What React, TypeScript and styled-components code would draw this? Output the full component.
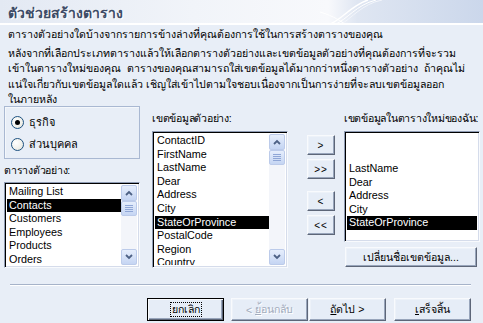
import React from 'react';
import styled, { createGlobalStyle, css } from 'styled-components';

const GlobalStyle = createGlobalStyle`
  html, body {
    margin: 0;
    padding: 0;
    background: #e8eef7;
  }
  * {
    box-sizing: border-box;
  }
`;

const FONT = `Tahoma, "Liberation Sans", "DejaVu Sans", "Noto Sans", sans-serif`;

const Dialog = styled.div`
  width: 483px;
  height: 323px;
  background: #e8eef7;
  font-family: ${FONT};
  font-size: 11px;
  color: #000;
  overflow: hidden;
  display: flex;
  flex-direction: column;
`;

const Header = styled.div`
  position: relative;
  height: 25px;
  flex: none;
  border-bottom: 2px solid #fff;
  background: linear-gradient(
    to right,
    #e3e9f3 0%,
    #f1f4f9 40%,
    #f8f9fc 68%,
    #dfe6f2 74%,
    #cbd7eb 100%
  );
  padding: 2px 0 0 8px;
  overflow: hidden;
`;

const Title = styled.div`
  position: relative;
  z-index: 1;
  font-size: 14px;
  font-weight: bold;
  color: #3d4b66;
  text-shadow: 1px 1px 0 #fff;
`;

const Swoosh = styled.svg`
  position: absolute;
  left: 320px;
  top: 0;
`;

const Intro = styled.div`
  flex: none;
  height: 81px;
  padding: 2px 8px 0 8px;
  font-size: 10.6px;
  line-height: 15.6px;
  white-space: nowrap;
  overflow: hidden;
`;

const Para = styled.p<{ $gap?: number }>`
  margin: 0 0 ${({ $gap }) => $gap ?? 0}px 0;
`;

const Main = styled.div`
  flex: none;
  height: 168px;
  display: flex;
  padding-left: 4px;
`;

const LeftCol = styled.div`
  width: 137px;
  display: flex;
  flex-direction: column;
`;

const GroupBox = styled.div`
  height: 53px;
  border: 1px solid #a9b8d2;
  box-shadow: inset 1px 1px 0 #f4f7fb;
  padding: 7px 0 0 6px;
  display: flex;
  flex-direction: column;
  gap: 6px;
`;

const RadioRow = styled.label`
  display: flex;
  align-items: center;
  gap: 5px;
  height: 16px;
`;

const RadioDot = styled.span<{ $checked?: boolean }>`
  width: 13px;
  height: 13px;
  border-radius: 50%;
  border: 1px solid #1c5180;
  background: radial-gradient(circle at 35% 35%, #ffffff 0%, #f0f0ea 60%, #d8d8cf 100%);
  display: flex;
  align-items: center;
  justify-content: center;
  &::after {
    content: '';
    width: 5px;
    height: 5px;
    border-radius: 50%;
    background: ${({ $checked }) => ($checked ? '#000' : 'transparent')};
  }
`;

const Label = styled.div<{ $top: number }>`
  margin-top: ${({ $top }) => $top}px;
  height: 13px;
  line-height: 13px;
  font-size: 10.6px;
  white-space: nowrap;
  letter-spacing: -0.25px;
`;

const ListBox = styled.div<{ $w: number; $h: number; $mt: number }>`
  width: ${({ $w }) => $w}px;
  height: ${({ $h }) => $h}px;
  margin-top: ${({ $mt }) => $mt}px;
  background: #fff;
  border: 1px solid;
  border-color: #8f9cb4 #f8fafd #f8fafd #8f9cb4;
  box-shadow: inset 1px 1px 0 #000, inset -1px -1px 0 #d5dceb;
  padding: 2px;
  display: flex;
  overflow: hidden;
`;

const Items = styled.div<{ $pt?: number }>`
  flex: 1;
  min-width: 0;
  padding-top: ${({ $pt }) => $pt ?? 0}px;
  overflow: hidden;
`;

const Item = styled.div<{ $sel?: boolean }>`
  height: 13.6px;
  line-height: 13.6px;
  padding-left: 2px;
  font-family: "Liberation Sans", Arial, sans-serif;
  font-size: 10.8px;
  white-space: nowrap;
  ${({ $sel }) =>
    $sel &&
    css`
      background: #000;
      color: #fff;
    `}
`;

const ScrollBar = styled.div`
  width: 16px;
  flex: none;
  display: flex;
  flex-direction: column;
  background: #f3f5fa;
`;

const ScrollBtn = styled.div`
  height: 16px;
  flex: none;
  border: 1px solid #bccbea;
  border-radius: 2px;
  background: linear-gradient(to bottom, #e6eefc, #c5d5f3);
  display: flex;
  align-items: center;
  justify-content: center;
`;

const Thumb = styled(ScrollBtn)`
  height: 15px;
`;

const ScrollSpace = styled.div`
  flex: 1;
`;

const MidCol = styled.div`
  width: 148px;
  margin-left: 12px;
  display: flex;
  flex-direction: column;
`;

const MoveCol = styled.div`
  width: 28px;
  margin-left: 8px;
  padding-top: 29px;
  display: flex;
  flex-direction: column;
`;

const bevel = css`
  background: #e6edf7;
  border: 1px solid;
  border-color: #f8fafd #5d6678 #5d6678 #f8fafd;
  box-shadow: inset -1px -1px 0 #98a5bb, inset 1px 1px 0 #edf2f9;
  font-family: ${FONT};
  font-size: 10.6px;
  color: #000;
  display: flex;
  align-items: center;
  justify-content: center;
  padding: 0;
  white-space: nowrap;
`;

const MoveBtn = styled.button<{ $mt?: number }>`
  ${bevel};
  width: 28px;
  height: 20px;
  margin-top: ${({ $mt }) => $mt ?? 0}px;
  font-family: "Liberation Sans", Arial, sans-serif;
  font-size: 10px;
  letter-spacing: 1px;
`;

const RightCol = styled.div`
  width: 140px;
  margin-left: 9px;
  display: flex;
  flex-direction: column;
`;

const RenameBtn = styled.button`
  ${bevel};
  width: 132px;
  height: 20px;
  margin-top: 5px;
  margin-left: 1px;
`;

const Separator = styled.div`
  flex: none;
  margin: 10px 12px 0 10px;
  height: 2px;
  border-top: 1px solid #a6b3c9;
  border-bottom: 1px solid #fff;
`;

const Footer = styled.div`
  flex: none;
  display: flex;
  justify-content: flex-end;
  padding: 12px 12px 0 0;
`;

const WizBtn = styled.button<{ $default?: boolean; $disabled?: boolean; $ml?: number }>`
  ${bevel};
  width: 77px;
  height: 23px;
  margin-left: ${({ $ml }) => $ml ?? 0}px;
  ${({ $default }) =>
    $default &&
    css`
      border: 1px solid #000;
      box-shadow: inset 1px 1px 0 #f8fafd, inset -1px -1px 0 #5d6678, inset -2px -2px 0 #98a5bb;
    `}
  ${({ $disabled }) =>
    $disabled &&
    css`
      color: #a3acbd;
      text-shadow: 1px 1px 0 #fff;
    `}
`;

const Focus = styled.span`
  outline: 1px dotted #000;
  outline-offset: 0px;
  padding: 0 1px;
  line-height: 13px;
`;

function Chevron({ up }: { up?: boolean }) {
  return (
    <svg width="8" height="6" viewBox="0 0 8 6">
      <path
        d={up ? 'M1 5 L4 2 L7 5' : 'M1 1 L4 4 L7 1'}
        fill="none"
        stroke="#4d6185"
        strokeWidth="1.8"
      />
    </svg>
  );
}

function Grip() {
  return (
    <svg width="8" height="7" viewBox="0 0 8 7">
      {[0.5, 2.5, 4.5, 6.5].map((y) => (
        <line key={y} x1="0" y1={y} x2="8" y2={y} stroke="#8fa6d6" strokeWidth="1" />
      ))}
    </svg>
  );
}

function Scroll() {
  return (
    <ScrollBar>
      <ScrollBtn>
        <Chevron up />
      </ScrollBtn>
      <Thumb>
        <Grip />
      </Thumb>
      <ScrollSpace />
      <ScrollBtn>
        <Chevron />
      </ScrollBtn>
    </ScrollBar>
  );
}

const tables = ['Mailing List', 'Contacts', 'Customers', 'Employees', 'Products', 'Orders'];
const fields = [
  'ContactID',
  'FirstName',
  'LastName',
  'Dear',
  'Address',
  'City',
  'StateOrProvince',
  'PostalCode',
  'Region',
  'Country',
];
const chosen = ['LastName', 'Dear', 'Address', 'City', 'StateOrProvince'];

export default function App() {
  return (
    <>
      <GlobalStyle />
      <Dialog>
        <Header>
          <Swoosh width="80" height="25" viewBox="0 0 80 25">
            <path d="M8 25 C 22 20, 30 6, 48 0" fill="none" stroke="#ffffff" strokeWidth="1.5" />
            <path d="M14 25 C 28 19, 36 5, 56 0" fill="none" stroke="#ffffff" strokeWidth="1" />
            <path d="M20 25 C 32 18, 42 4, 62 0" fill="none" stroke="#f2f5fb" strokeWidth="1" />
            <path d="M0 12 C 14 16, 22 22, 26 25" fill="none" stroke="#ffffff" strokeWidth="1" />
          </Swoosh>
          <Title>ตัวช่วยสร้างตาราง</Title>
        </Header>
        <Intro>
          <Para $gap={3}>ตารางตัวอย่างใดบ้างจากรายการข้างล่างที่คุณต้องการใช้ในการสร้างตารางของคุณ</Para>
          <Para>
            หลังจากที่เลือกประเภทตารางแล้วให้เลือกตารางตัวอย่างและเขตข้อมูลตัวอย่างที่คุณต้องการที่จะรวม
            <br />
            เข้าในตารางใหม่ของคุณ&nbsp; ตารางของคุณสามารถใส่เขตข้อมูลได้มากกว่าหนึ่งตารางตัวอย่าง&nbsp; ถ้าคุณไม่
            <br />
            แน่ใจเกี่ยวกับเขตข้อมูลใดแล้ว เชิญใส่เข้าไปตามใจชอบเนื่องจากเป็นการง่ายที่จะลบเขตข้อมูลออก
            <br />
            ในภายหลัง
          </Para>
        </Intro>
        <Main>
          <LeftCol>
            <GroupBox>
              <RadioRow>
                <RadioDot $checked />
                ธุรกิจ
              </RadioRow>
              <RadioRow>
                <RadioDot />
                ส่วนบุคคล
              </RadioRow>
            </GroupBox>
            <Label $top={5}>ตารางตัวอย่าง:</Label>
            <ListBox $w={136} $h={86} $mt={5}>
              <Items>
                {tables.map((t) => (
                  <Item key={t} $sel={t === 'Contacts'}>
                    {t}
                  </Item>
                ))}
              </Items>
              <Scroll />
            </ListBox>
          </LeftCol>
          <MidCol>
            <Label $top={6}>เขตข้อมูลตัวอย่าง:</Label>
            <ListBox $w={136} $h={137} $mt={6}>
              <Items>
                {fields.map((f) => (
                  <Item key={f} $sel={f === 'StateOrProvince'}>
                    {f}
                  </Item>
                ))}
              </Items>
              <Scroll />
            </ListBox>
          </MidCol>
          <MoveCol>
            <MoveBtn>&gt;</MoveBtn>
            <MoveBtn $mt={4}>&gt;&gt;</MoveBtn>
            <MoveBtn $mt={12}>&lt;</MoveBtn>
            <MoveBtn $mt={4}>&lt;&lt;</MoveBtn>
          </MoveCol>
          <RightCol>
            <Label $top={6}>เขตข้อมูลในตารางใหม่ของฉัน:</Label>
            <ListBox $w={136} $h={111} $mt={6}>
              <Items $pt={28}>
                {chosen.map((f) => (
                  <Item key={f} $sel={f === 'StateOrProvince'}>
                    {f}
                  </Item>
                ))}
              </Items>
            </ListBox>
            <RenameBtn>เปลี่ยนชื่อเขตข้อมูล...</RenameBtn>
          </RightCol>
        </Main>
        <Separator />
        <Footer>
          <WizBtn $default>
            <Focus>ยกเลิก</Focus>
          </WizBtn>
          <WizBtn $disabled $ml={7}>
            &lt;&nbsp;<u>ย</u>้อนกลับ
          </WizBtn>
          <WizBtn $ml={1}>
            <u>ถ</u>ัดไป &gt;
          </WizBtn>
          <WizBtn $ml={8}>
            <u>เ</u>สร็จสิ้น
          </WizBtn>
        </Footer>
      </Dialog>
    </>
  );
}
